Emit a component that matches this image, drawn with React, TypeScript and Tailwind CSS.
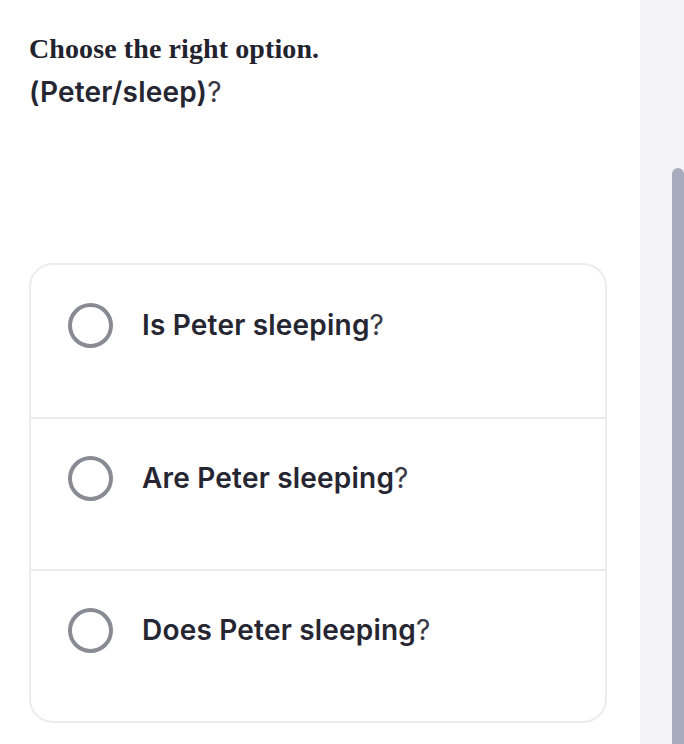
const options = ["Is Peter sleeping", "Are Peter sleeping", "Does Peter sleeping"];

const App = () => {
  return (
    <div className="flex h-[744px] w-[684px] overflow-hidden bg-white">
      {/* Content */}
      <div className="w-[640px] shrink-0 px-[29px] pt-[32px]">
        <h1 className="font-['Liberation_Serif',serif] text-[28px] font-bold tracking-[0.1px] leading-[34px] text-[#23232e]">
          Choose the right option.
        </h1>
        <p className="mt-[9px] font-['Inter',sans-serif] text-[28px] font-semibold tracking-[0.2px] leading-[34px] text-[#262633]">
          (Peter/sleep)<span className="font-normal text-[#3a3a46]">?</span>
        </p>

        {/* Options card */}
        <div className="mt-[154px] w-[578px] overflow-hidden rounded-[24px] border-2 border-[#ececec]">
          {options.map((o, i) => (
            <div
              key={o}
              className={`flex h-[152px] items-center pb-[32px] pl-[37px] ${i > 0 ? "border-t-2 border-[#ececec]" : ""}`}
            >
              <div className="size-[45px] shrink-0 rounded-full border-[4px] border-[#8a8a95]" />
              <span className="ml-[29px] font-['Inter',sans-serif] text-[28px] font-semibold tracking-[0.2px] text-[#262633]">
                {o}
                <span className="font-normal text-[#3a3a46]">?</span>
              </span>
            </div>
          ))}
        </div>
      </div>

      {/* Scrollbar strip */}
      <div className="flex flex-1 justify-end bg-[#f2f2f7] pt-[168px]">
        <div className="h-full w-[12px] rounded-t-full bg-[#a8abbb]" />
      </div>
    </div>
  );
};

export default App;
